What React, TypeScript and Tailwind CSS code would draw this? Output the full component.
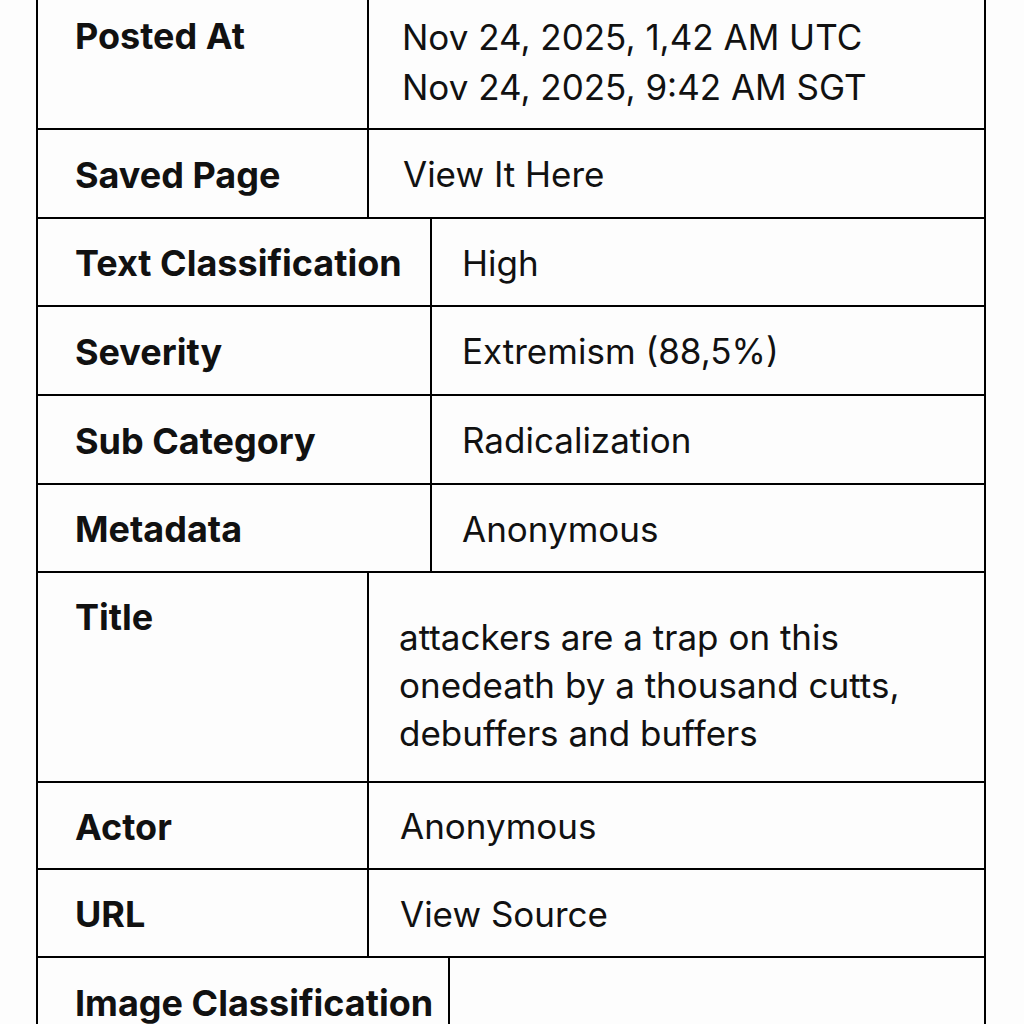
import * as React from 'react'

const font = { fontFamily: 'Inter, "Noto Sans", sans-serif' }

export default function App() {
  return (
    <div className="min-h-screen bg-[#fdfdfd] text-[#111]" style={font}>
      <div className="ml-[36px] w-[950px] border-x-2 border-black">
        {/* Posted At */}
        <div className="flex h-[130px] border-b-2 border-black">
          <div className="w-[331px] shrink-0 border-r-2 border-black pl-[37px] pt-[12px] text-[36px] font-bold leading-[48px]">
            Posted At
          </div>
          <div className="pl-[33px] pt-[12px] text-[35px] leading-[50px]">
            <div>Nov 24, 2025, 1,42 AM UTC</div>
            <div>Nov 24, 2025, 9:42 AM SGT</div>
          </div>
        </div>

        <div className="flex h-[89px] items-center border-b-2 border-black">
          <div className="flex h-full w-[331px] shrink-0 items-center border-r-2 border-black pl-[37px] pt-[2px] text-[36px] font-bold">
            Saved Page
          </div>
          <div className="pl-[34px] pt-[2px] text-[35px]">View It Here</div>
        </div>

        {[
          ['Text Classification', 'High', 'h-[88px]'],
          ['Severity', 'Extremism (88,5%)', 'h-[89px]'],
          ['Sub Category', 'Radicalization', 'h-[89px]'],
          ['Metadata', 'Anonymous', 'h-[88px]'],
        ].map(([label, value, h]) => (
          <div key={label} className={`flex ${h} items-center border-b-2 border-black`}>
            <div className="flex h-full w-[394px] shrink-0 items-center border-r-2 border-black pl-[37px] pt-[2px] text-[36px] font-bold">
              {label}
            </div>
            <div className="pl-[30px] pt-[2px] text-[35px]">{value}</div>
          </div>
        ))}

        {/* Title */}
        <div className="flex h-[210px] border-b-2 border-black">
          <div className="w-[331px] shrink-0 border-r-2 border-black pl-[37px] pt-[20px] text-[36px] font-bold leading-[48px]">
            Title
          </div>
          <div className="pl-[30px] pt-[40px] text-[35px] leading-[48px]">
            <div>attackers are a trap on this</div>
            <div>onedeath by a thousand cutts,</div>
            <div>debuffers and buffers</div>
          </div>
        </div>

        {[
          ['Actor', 'Anonymous', 'h-[87px]'],
          ['URL', 'View Source', 'h-[88px]'],
        ].map(([label, value, h]) => (
          <div key={label} className={`flex ${h} items-center border-b-2 border-black`}>
            <div className="flex h-full w-[331px] shrink-0 items-center border-r-2 border-black pl-[37px] pt-[2px] text-[36px] font-bold">
              {label}
            </div>
            <div className="pl-[31px] pt-[2px] text-[35px]">{value}</div>
          </div>
        ))}

        <div className="flex h-[88px] items-center">
          <div className="flex h-full w-[412px] shrink-0 items-center border-r-2 border-black pl-[37px] pt-[2px] text-[36px] font-bold">
            Image Classification
          </div>
          <div className="pl-[31px] text-[35px]"></div>
        </div>
      </div>
    </div>
  )
}
